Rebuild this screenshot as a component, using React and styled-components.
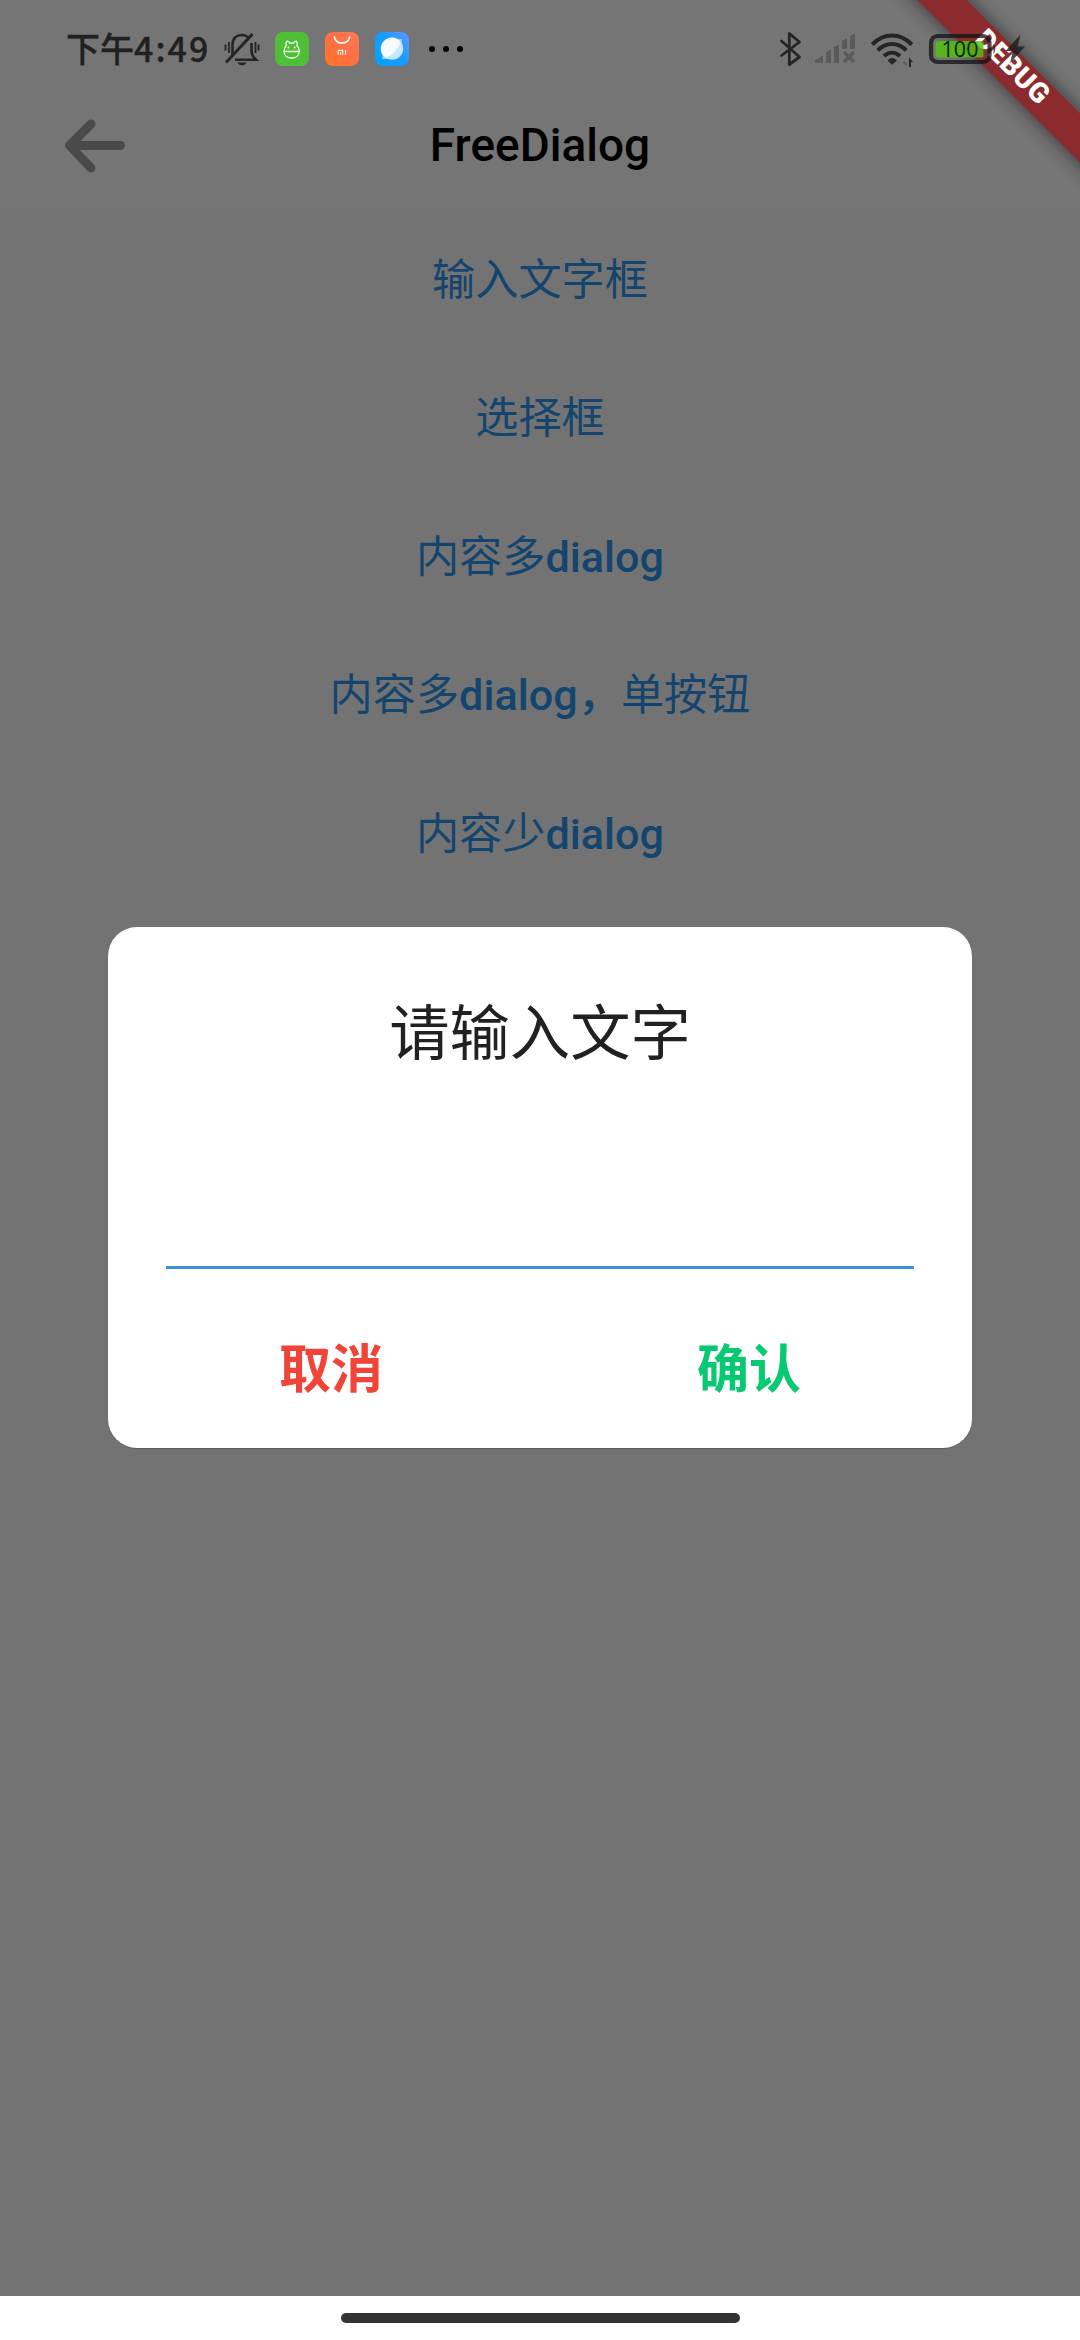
import React from "react";
import styled, { createGlobalStyle } from "styled-components";

const Global = createGlobalStyle`
  * { box-sizing: border-box; }
  html, body { margin: 0; padding: 0; background: #fff; }
  body { font-family: Roboto, "Noto Sans CJK SC", sans-serif; }
  button { border: 0; padding: 0; background: none; font-family: inherit; }
`;

const Screen = styled.div`
  position: relative;
  width: 1080px;
  height: 2340px;
  overflow: hidden;
  display: flex;
  flex-direction: column;
  background: #737373;
`;

const TopArea = styled.header`
  height: 209px;
  flex: none;
  background: #757575;
`;

const StatusBar = styled.div`
  position: relative;
  z-index: 2;
  height: 98px;
  padding: 0 54px 0 66px;
  display: flex;
  justify-content: space-between;
  color: #212121;
`;

const StatusGroup = styled.div`
  display: flex;
  align-items: center;
  height: 98px;
`;

const Clock = styled.span`
  font-family: "Noto Sans CJK SC", sans-serif;
  font-weight: 500;
  font-size: 34px;
  line-height: 48px;
  width: 158px;
  padding-bottom: 2px;
  white-space: nowrap;
  -webkit-text-stroke: 0.3px #212121;
`;

const Digits = styled.span`
  letter-spacing: 2px;
`;

const Glyph = styled.svg`
  display: block;
  flex: none;
  margin-left: ${(p) => p.$gap || 0}px;
`;

const BatteryLevel = styled.text`
  font-family: "Open Sans", sans-serif;
  font-size: 21.5px;
  fill: #0b2400;
`;

const AppBar = styled.div`
  height: 111px;
  padding: 0 65px 16px;
  display: grid;
  grid-template-columns: 60px 1fr 60px;
  align-items: center;
`;

const BackButton = styled.button`
  height: 54px;
`;

const Title = styled.h1`
  margin: 0;
  text-align: center;
  font-size: 46px;
  font-weight: 500;
  line-height: 54px;
  color: #000;
  padding-bottom: 1px;
`;

const Menu = styled.nav`
  flex: 1;
  display: flex;
  flex-direction: column;
  align-items: center;
  padding-top: 3px;
`;

const MenuItem = styled.button`
  height: 138.4px;
  font-size: 43.2px;
  line-height: 138.4px;
  color: #13456e;
  white-space: nowrap;
`;

const Han = styled.span`
  font-weight: ${(p) => (p.$strong ? 500 : 400)};
`;

const Latin = styled.span`
  font-weight: 500;
`;

const DebugRibbon = styled.div`
  position: absolute;
  z-index: 1;
  top: 0;
  right: 0;
  width: 210px;
  height: 210px;
`;

const RibbonText = styled.text`
  font-family: Roboto, sans-serif;
  font-size: 28px;
  font-weight: 900;
  fill: #fff;
`;

const Dialog = styled.section`
  position: absolute;
  z-index: 3;
  top: 927px;
  left: 108px;
  width: 864px;
  height: 521px;
  border-radius: 29px;
  background: #fff;
  box-shadow: 0 1px 1px rgba(0, 0, 0, 0.2);
  padding: 60px 58px 0;
  display: flex;
  flex-direction: column;
`;

const DialogTitle = styled.h2`
  margin: 0;
  height: 84px;
  text-align: center;
  font-family: "Noto Sans CJK SC", sans-serif;
  font-size: 60.3px;
  font-weight: 400;
  line-height: 84px;
  color: #212121;
`;

const Field = styled.input`
  height: 198px;
  width: 748px;
  padding: 0;
  border: 0;
  border-bottom: 3px solid #3b93d6;
  outline: 0;
  background: transparent;
  font-size: 43px;
`;

const Actions = styled.div`
  display: grid;
  grid-template-columns: 1fr 1fr;
  margin: 0 -44px;
  height: 179px;
  align-items: center;
  padding-top: 14px;
`;

const Action = styled.button`
  font-family: "Noto Sans CJK SC", sans-serif;
  font-size: 52px;
  font-weight: 700;
  line-height: 76px;
  color: ${(p) => p.$color};
`;

const NavBar = styled.footer`
  height: 44px;
  flex: none;
  background: #fff;
  display: flex;
  justify-content: center;
  padding-top: 17px;
`;

const HomePill = styled.div`
  width: 399px;
  height: 10px;
  border-radius: 5px;
  background: #333;
`;

function MutedBell() {
  return (
    <Glyph width="36" height="36" viewBox="0 0 36 36" fill="none" stroke="#252525" strokeWidth="2.6">
      <path d="M8.5 24V13.5C8.5 7.5 12.5 4 17.5 4C21 4 23.7 5.3 25.3 8" />
      <path d="M27.5 12V20C27.5 24 29 26 32 28.8H11" />
      <path d="M2 31.5L28.5 3" strokeWidth="3" />
      <path d="M13 31.5H23Q21 34.3 18 34.3Q15 34.3 13 31.5Z" fill="#252525" stroke="none" />
      <path d="M1.5 13.5V19.5M5 11V22M31.5 11V22M34.5 13.5V19.5" strokeWidth="1.8" />
    </Glyph>
  );
}

function GreenApp() {
  return (
    <Glyph $gap={15} width="34" height="34" viewBox="0 0 34 34" fill="none">
      <rect width="34" height="34" rx="8" fill="#50bf38" />
      <g stroke="#efffe9" strokeWidth="1.3">
        <path d="M9 19.5H24.3C24.3 23.5 21 26 16.6 26S9 23.5 9 19.5C9 17 10 15 11.3 13.5C10.7 11.5 11 10 12 9.2C13.3 9.5 14.3 10.2 14.8 11.2H18.4C19 10.2 20 9.5 21.3 9.2C22.3 10 22.5 11.5 22 13.5C23.5 15 24.3 17 24.3 19.5" />
      </g>
      <circle cx="13.5" cy="15.5" r="1" fill="#efffe9" />
      <circle cx="19.7" cy="15.5" r="1" fill="#efffe9" />
    </Glyph>
  );
}

function MiApp() {
  return (
    <Glyph $gap={16} width="34" height="34" viewBox="0 0 34 34" fill="none">
      <defs>
        <linearGradient id="mi" x1="0" y1="1" x2="1" y2="0">
          <stop offset="0" stopColor="#ff7426" />
          <stop offset=".5" stopColor="#ff6f43" />
          <stop offset="1" stopColor="#ff7a58" />
        </linearGradient>
      </defs>
      <rect width="34" height="34" rx="8" fill="url(#mi)" />
      <path d="M9.3 4.5C10 8.5 12.8 11 17 11S24 8.5 24.7 4.5" stroke="#fff" strokeWidth="1.5" />
      <path d="M13.3 22.7V18.4H17.7V22.7M15.5 20V22.7M20.5 18V22.7" stroke="#fff" strokeWidth="1.1" />
    </Glyph>
  );
}

function BrowserApp() {
  return (
    <Glyph $gap={16} width="34" height="34" viewBox="0 0 34 34">
      <defs>
        <linearGradient id="sky" x1="0" y1=".8" x2="1" y2="0">
          <stop offset="0" stopColor="#00a2ff" />
          <stop offset=".5" stopColor="#179cff" />
          <stop offset="1" stopColor="#6098ff" />
        </linearGradient>
      </defs>
      <rect width="34" height="34" rx="8" fill="url(#sky)" />
      <path d="M27 7L26.5 14L14 27L7 27L8 20L20 7.5Z" fill="#8fd0ff" />
      <circle cx="17.2" cy="16.8" r="11" fill="#c6e6ff" />
      <path d="M25.5 10A11 11 0 1 0 11 26C17 23 24 17 25.5 10Z" fill="#f5fbff" />
    </Glyph>
  );
}

function MoreDots() {
  return (
    <Glyph $gap={20} width="36" height="6" viewBox="0 0 36 6" fill="#000">
      <circle cx="3" cy="3" r="3" />
      <circle cx="17" cy="3" r="3" />
      <circle cx="31" cy="3" r="3" />
    </Glyph>
  );
}

function SystemIcons() {
  return (
    <Glyph width="252" height="44" viewBox="774 27 252 44" fill="none">
      <path d="M781.5 41L799.5 57L789.3 64.5V33.5L799.5 42L781.5 55.5" stroke="#252525" strokeWidth="2.8" strokeLinejoin="round" strokeLinecap="round" />
      <g fill="#5b5b5b">
        <path d="M815 63V60L823 55.5V63Z" />
        <path d="M826 63V52.5L831 49.5V63Z" />
        <path d="M834 63V47L839 44.5V63Z" />
        <path d="M842 49V41L847 38V49Z" />
        <path d="M850 49V36L855 33.5V49Z" />
      </g>
      <path d="M844 52L854 62M854 52L844 62" stroke="#5b5b5b" strokeWidth="3.5" />
      <g stroke="#252525" strokeWidth="4">
        <path d="M872.2 44.5C884 32.5 900 32.5 911.8 44.5" />
        <path d="M877.8 50.3C886 42 898 42 906.2 50.3" />
        <path d="M884 56C889 51.5 895 51.5 900 56" />
      </g>
      <path d="M888 60.5Q892 56.5 896.3 60.5L892 64.3Z" fill="#252525" stroke="#252525" />
      <path d="M906.5 57V66.5L902.5 62H906.5" fill="#5b5b5b" />
      <path d="M909 67V57.5L913 62H911V67Z" fill="#252525" />
      <rect x="931" y="36" width="58.5" height="26" rx="6.5" stroke="#161616" strokeOpacity=".78" strokeWidth="4.2" />
      <rect x="935.5" y="41" width="48" height="16.5" rx="2.5" fill="#50c310" fillOpacity=".82" />
      <path d="M993.5 44Q997 49 993.5 54Z" fill="#161616" fillOpacity=".75" />
      <BatteryLevel x="941.5" y="57.3" textLength="37">100</BatteryLevel>
      <path d="M1020.5 34.5L1005.5 51H1013L1010 63L1025 46.5H1017.5Z" fill="#1c1c1c" fillOpacity=".8" />
    </Glyph>
  );
}

const items = [
  [["han", "输入文字框"]],
  [["han", "选择框"]],
  [["han", "内容多"], ["latin", "dialog"]],
  [["han", "内容多"], ["latin", "dialog"], ["strong", "，"], ["han", "单按钮"]],
  [["han", "内容少"], ["latin", "dialog"]],
];

function Label({ parts }) {
  return parts.map(([kind, text]) =>
    kind === "latin" ? (
      <Latin key={text}>{text}</Latin>
    ) : (
      <Han key={text} $strong={kind === "strong"}>
        {text}
      </Han>
    )
  );
}

export default function App() {
  return (
    <Screen lang="zh-CN">
      <Global />
      <TopArea>
        <StatusBar>
          <StatusGroup>
            <Clock>
              下午<Digits>4:49</Digits>
            </Clock>
            <MutedBell />
            <GreenApp />
            <MiApp />
            <BrowserApp />
            <MoreDots />
          </StatusGroup>
          <StatusGroup>
            <SystemIcons />
          </StatusGroup>
        </StatusBar>
        <AppBar>
          <BackButton aria-label="Back">
            <svg width="60" height="54" viewBox="65 119 60 54" fill="none" stroke="#4a4a4a" strokeLinecap="round" strokeLinejoin="round">
              <path d="M91 124L69.5 145.5L91 168" strokeWidth="9" />
              <path d="M71 145.5H120.5" strokeWidth="9" />
            </svg>
          </BackButton>
          <Title>FreeDialog</Title>
        </AppBar>
      </TopArea>
      <Menu>
        {items.map((parts, i) => (
          <MenuItem key={i}>
            <Label parts={parts} />
          </MenuItem>
        ))}
      </Menu>
      <NavBar>
        <HomePill />
      </NavBar>
      <DebugRibbon>
        <svg width="210" height="210" viewBox="870 0 210 210">
          <defs>
            <filter id="soft" x="-30%" y="-30%" width="160%" height="160%">
              <feGaussianBlur stdDeviation="10" />
            </filter>
          </defs>
          <path d="M877.5 -40H926.5L1120 153.5V202.5Z" fill="#000" fillOpacity=".55" filter="url(#soft)" />
          <path d="M906.5 -11H955.5L1110 143.5V192.5Z" fill="#8b2b2d" />
          <RibbonText transform="translate(973.4 40.8) rotate(45)" textLength="92">
            DEBUG
          </RibbonText>
        </svg>
      </DebugRibbon>
      <Dialog role="dialog">
        <DialogTitle>请输入文字</DialogTitle>
        <Field aria-label="请输入文字" />
        <Actions>
          <Action $color="#f04438">取消</Action>
          <Action $color="#06c971">确认</Action>
        </Actions>
      </Dialog>
    </Screen>
  );
}
